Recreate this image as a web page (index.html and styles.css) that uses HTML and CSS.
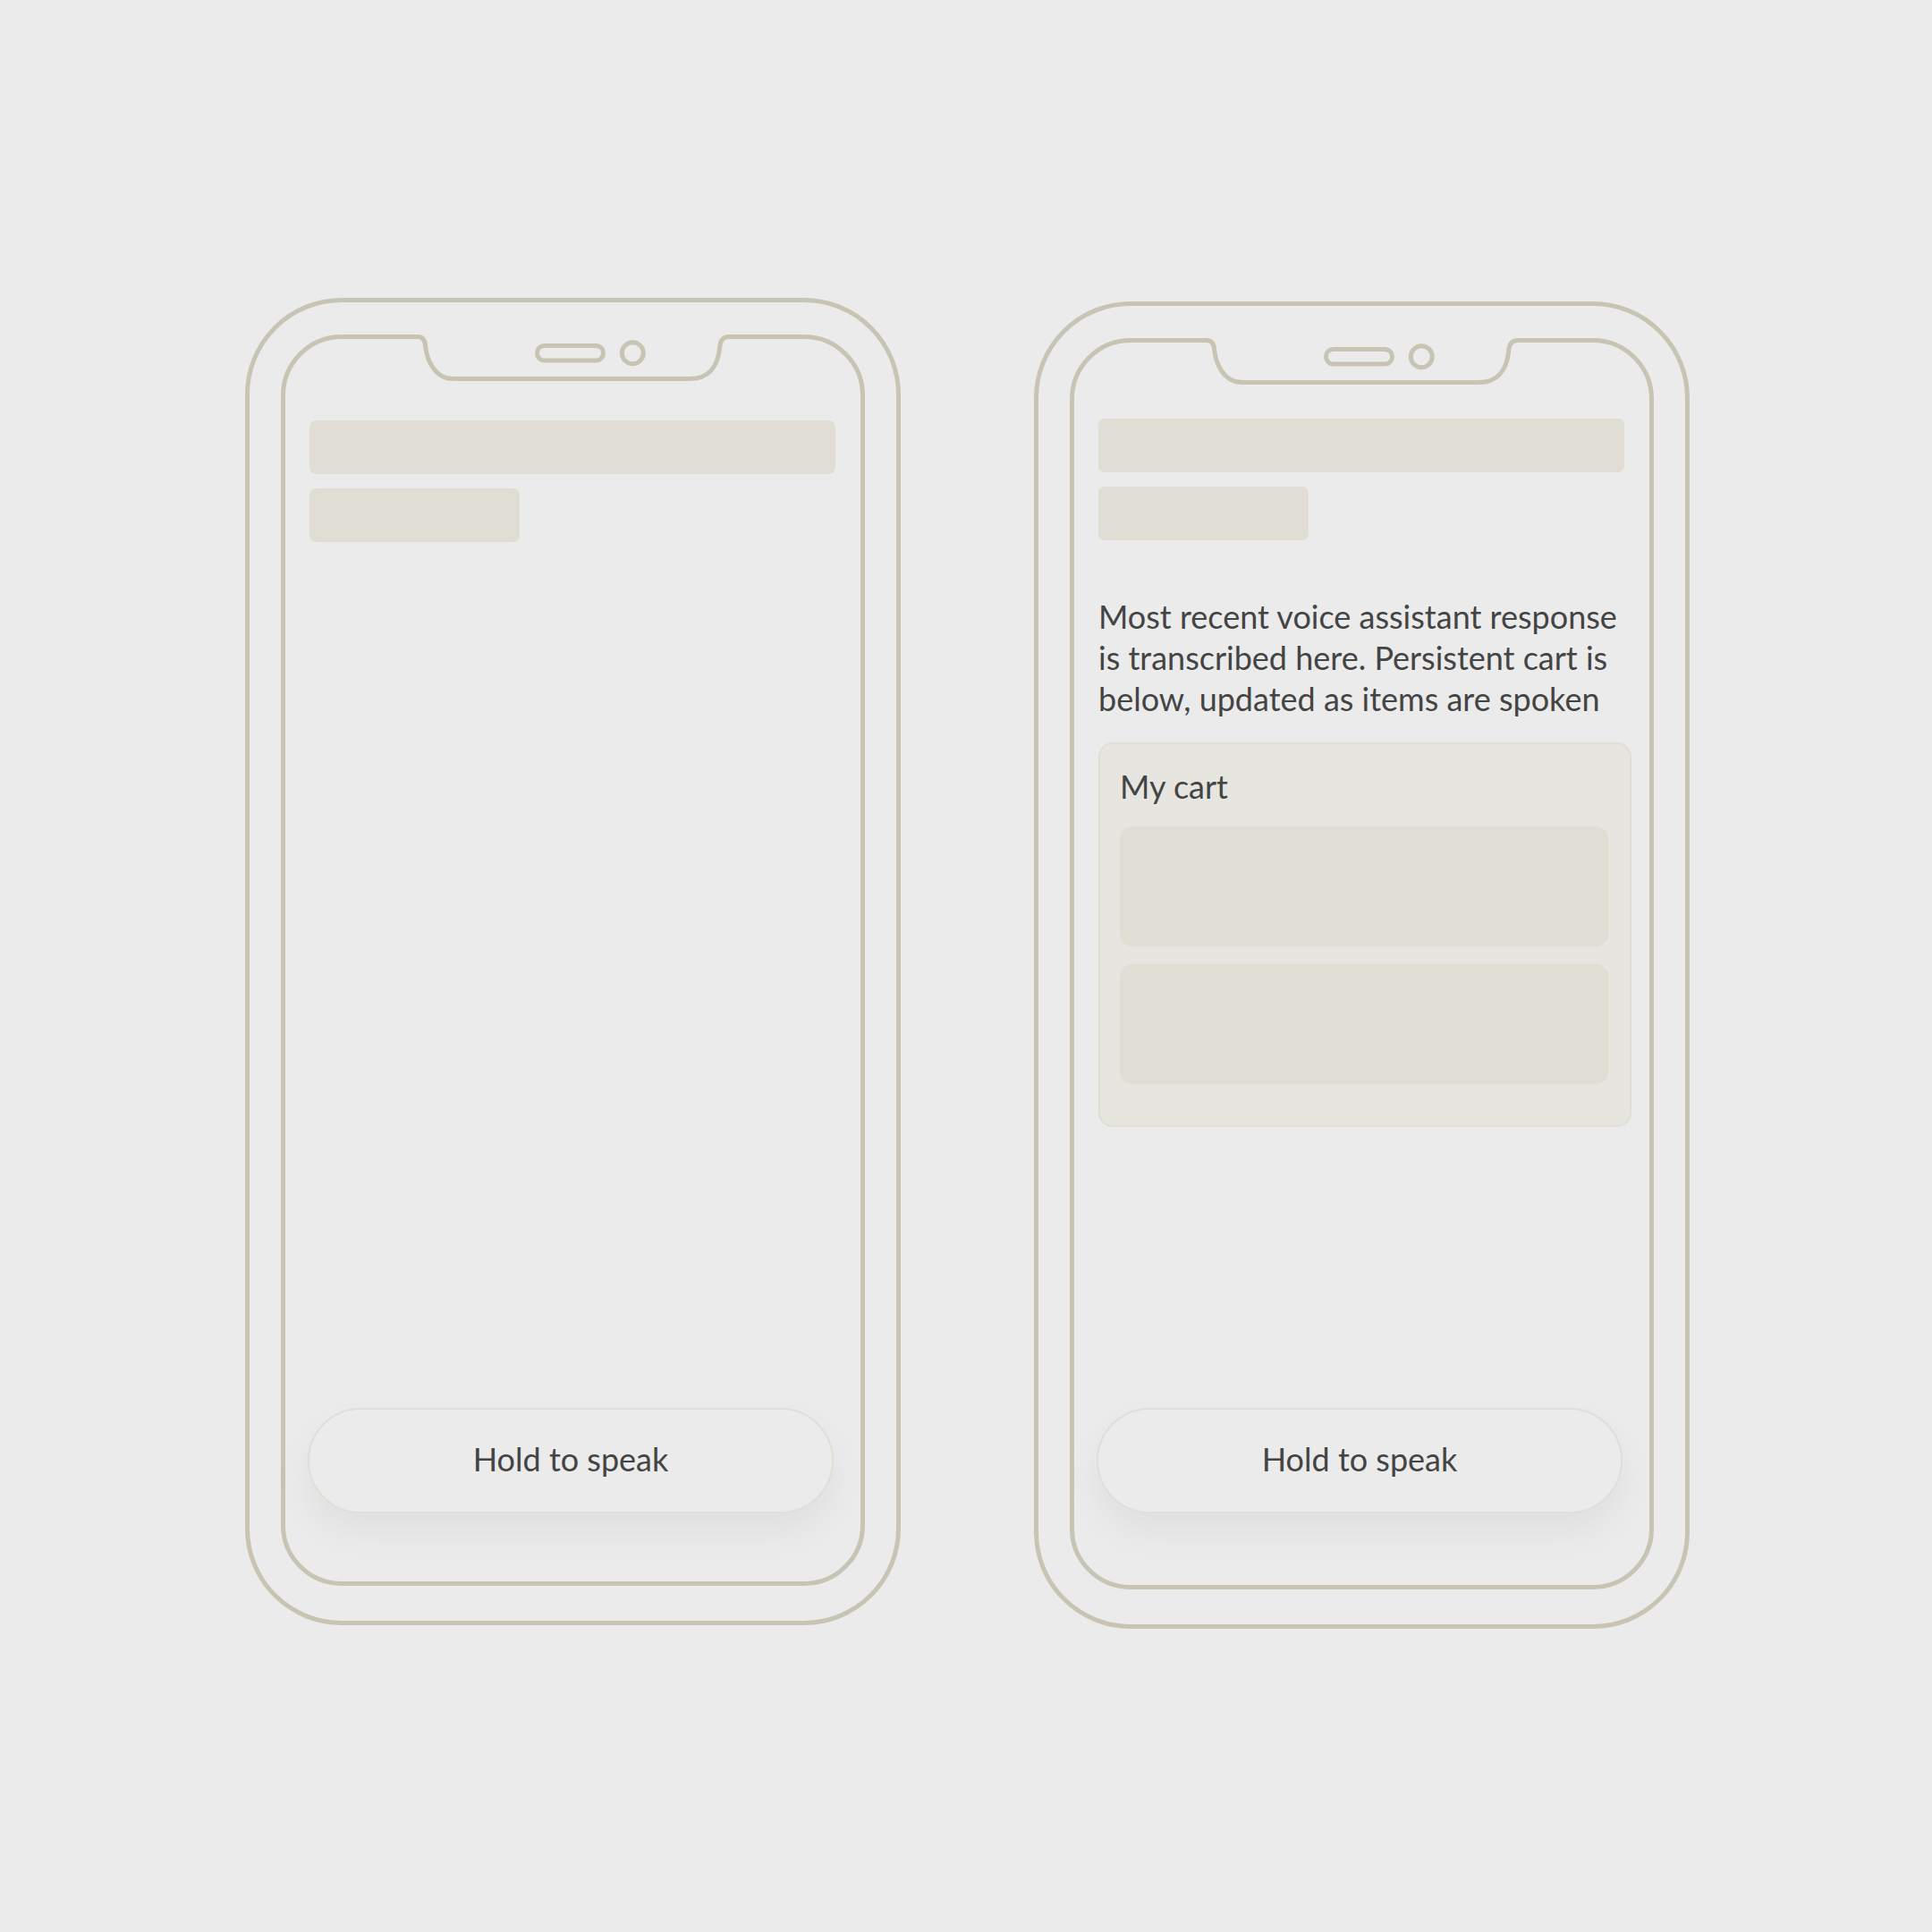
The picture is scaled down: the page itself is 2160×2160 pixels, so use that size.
FILE: index.html
```html
<!DOCTYPE html>
<html lang="en">
<head>
<meta charset="utf-8">
<meta name="viewport" content="width=device-width, initial-scale=1">
<title>Voice ordering wireframes</title>
<link rel="stylesheet" href="styles.css">
</head>
<body>
<main class="board">
  <section class="phone" aria-label="Start screen">
    <div class="screen">
      <svg class="notch" viewBox="460 374 361 54" aria-hidden="true">
        <rect class="notch-gap" x="466" y="374" width="348" height="6"/>
        <path class="line" d="M464 376.500H467C472 376.500 475 380 475.500 386C477 402 486 424.500 508 423.500H771C794 423.500 803 409 805 386C806 379 810 376.500 815 376.500H817"/>
        <rect class="line" x="600.500" y="386.500" width="74" height="16.500" rx="8"/>
        <circle class="line" cx="707.300" cy="394.700" r="12"/>
      </svg>
      <div class="heading">
        <div class="bar"></div>
        <div class="bar bar-short"></div>
      </div>
      <div class="actions">
        <button class="speak" type="button">Hold to speak</button>
      </div>
    </div>
  </section>

  <section class="phone phone-active" aria-label="Conversation screen">
    <div class="screen">
      <svg class="notch" viewBox="460 374 361 54" aria-hidden="true">
        <rect class="notch-gap" x="466" y="374" width="348" height="6"/>
        <path class="line" d="M464 376.500H467C472 376.500 475 380 475.500 386C477 402 486 424.500 508 423.500H771C794 423.500 803 409 805 386C806 379 810 376.500 815 376.500H817"/>
        <rect class="line" x="600.500" y="386.500" width="74" height="16.500" rx="8"/>
        <circle class="line" cx="707.300" cy="394.700" r="12"/>
      </svg>
      <div class="heading">
        <div class="bar"></div>
        <div class="bar bar-short"></div>
      </div>
      <p class="response">Most recent voice assistant response<br>is transcribed here. Persistent cart is<br>below, updated as items are spoken</p>
      <section class="cart">
        <h2 class="cart-title">My cart</h2>
        <div class="cart-items">
          <div class="cart-item"></div>
          <div class="cart-item"></div>
        </div>
      </section>
      <div class="actions">
        <button class="speak" type="button">Hold to speak</button>
      </div>
    </div>
  </section>
</main>
</body>
</html>
```
FILE: styles.css
```css
:root {
  --page: #ebebeb;
  --line: #c8c4b4;
  --block: #e0ddd5;
  --card: #e6e5df;
  --edge: #e0dfd6;
  --text: #444444;
}

* {
  box-sizing: border-box;
}

body {
  margin: 0;
  background: var(--page);
  color: var(--text);
  font-family: Lato, "Liberation Sans", sans-serif;
  font-size: 36px;
  line-height: 46px;
}

.board {
  display: flex;
  flex-wrap: wrap;
  justify-content: center;
  align-items: flex-start;
  gap: 149px;
  padding: 333px 0 100px 3px;
}

.phone {
  display: flex;
  flex: 0 1 733px;
  min-height: 1484px;
  padding: 36px 35px 39px;
  border: 5px solid var(--line);
  border-radius: 108px;
}

.phone-active {
  margin-top: 4px;
}

.screen {
  position: relative;
  flex: 1;
  display: flex;
  flex-direction: column;
  padding: 91px 0 76px;
  border: 5px solid var(--line);
  border-radius: 68px;
}

.phone-active .screen {
  padding: 85px 0 80px;
}

/* Sits over the top edge of the screen outline. */
.notch {
  position: absolute;
  top: -5px;
  left: 0;
  right: 0;
  width: 361px;
  height: 54px;
  margin: 0 auto;
}

.notch-gap {
  fill: var(--page);
}

.line {
  fill: none;
  stroke: var(--line);
  stroke-width: 5;
}

.heading {
  display: flex;
  flex-direction: column;
  gap: 16px;
  padding: 0 28px 0 27px;
}

.bar {
  height: 60px;
  border-radius: 7px;
  background: var(--block);
}

.bar-short {
  width: 40%;
}

.response {
  margin: 62px 0 0;
  padding-left: 27px;
}

.cart {
  margin: 26px 20px 0 27px;
  padding: 24px 24px 46px 22px;
  border: 2px solid var(--edge);
  border-radius: 16px;
  background: var(--card);
}

.cart-title {
  margin: 0;
  font-size: inherit;
  font-weight: 400;
}

.cart-items {
  display: grid;
  gap: 20px;
  margin-top: 22px;
}

.cart-item {
  height: 134px;
  border-radius: 14px;
  background: var(--block);
}

.actions {
  display: flex;
  margin-top: auto;
  padding: 0 30px 0 25px;
}

.speak {
  flex: 1;
  height: 118px;
  padding: 0 0 4px;
  border: 2px solid var(--edge);
  border-radius: 59px;
  background: var(--page);
  box-shadow: 0 20px 40px rgb(0 0 0 / 5%);
  color: inherit;
  font: inherit;
}
```
